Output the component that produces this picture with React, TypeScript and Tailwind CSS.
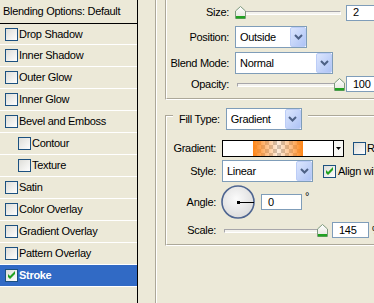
import React from "react";

function CheckBox({ checked = false }: { checked?: boolean }) {
  return (
    <svg width="13" height="13" viewBox="0 0 13 13" className="shrink-0">
      <defs>
        <linearGradient id="cbfill" x1="0" y1="0" x2="1" y2="1">
          <stop offset="0" stopColor="#DCDCD7" />
          <stop offset="1" stopColor="#FFFFFF" />
        </linearGradient>
      </defs>
      <rect x="0.5" y="0.5" width="12" height="12" fill="url(#cbfill)" stroke="#1C5180" />
      {checked && <path d="M3 5 L5 7 L10 2 L10 5 L5 10 L3 8 Z" fill="#21A121" />}
    </svg>
  );
}

function Combo({ text, className }: { text: string; className: string }) {
  return (
    <div className={`flex h-[22px] shrink-0 border border-[#7F9DB9] bg-white ${className}`}>
      <span className="flex flex-1 items-center pl-[4px]">{text}</span>
      <div className="flex w-[16px] items-center justify-center rounded-[2px] border border-[#BCCDF7] bg-gradient-to-br from-[#DCE6FD] to-[#AEC3F5]">
        <svg width="9" height="6" viewBox="0 0 9 6">
          <polyline points="1,1 4.5,4.5 8,1" fill="none" stroke="#4D6185" strokeWidth="2" />
        </svg>
      </div>
    </div>
  );
}

function Thumb() {
  return (
    <svg width="11" height="13" viewBox="0 0 11 13">
      <defs>
        <linearGradient id="thumbfill" x1="0" y1="0" x2="0" y2="1">
          <stop offset="0" stopColor="#FFFFFF" />
          <stop offset="1" stopColor="#E4E4DC" />
        </linearGradient>
      </defs>
      <path d="M0.5 12.5 V5 L5.5 0.5 L10.5 5 V12.5 Z" fill="url(#thumbfill)" stroke="#7E9A7E" />
      <rect x="1" y="10" width="9" height="2.5" fill="#21A121" />
    </svg>
  );
}

function Slider({ className, thumbClass }: { className: string; thumbClass: string }) {
  return (
    <div className={`relative h-[13px] shrink-0 ${className}`}>
      <div className="absolute left-[2px] right-[3px] top-[5px] h-[4px] border border-[#A7A6AA] border-b-white border-r-white bg-[#F4F3EE]" />
      <div className={`absolute top-0 h-[13px] ${thumbClass}`}>
        <Thumb />
      </div>
    </div>
  );
}

function TextBox({ value, className }: { value: string; className: string }) {
  return (
    <div className={`flex h-[16px] shrink-0 items-center border border-[#7F9DB9] bg-white pl-[6px] ${className}`}>
      {value}
    </div>
  );
}

const rows: { label: string; indent?: boolean; selected?: boolean }[] = [
  { label: "Drop Shadow" },
  { label: "Inner Shadow" },
  { label: "Outer Glow" },
  { label: "Inner Glow" },
  { label: "Bevel and Emboss" },
  { label: "Contour", indent: true },
  { label: "Texture", indent: true },
  { label: "Satin" },
  { label: "Color Overlay" },
  { label: "Gradient Overlay" },
  { label: "Pattern Overlay" },
  { label: "Stroke", selected: true },
];

export default function App() {
  return (
    <div className="flex h-[303px] w-[374px] overflow-hidden bg-[#ECE9D8] font-['Liberation_Sans',Arial,sans-serif] text-[11px] leading-none tracking-[-0.3px] text-black">
      {/* Left style list */}
      <div className="flex w-[138px] shrink-0 flex-col border-r border-black">
        <div className="flex h-[23px] items-center pl-[3px]">Blending Options: Default</div>
        <div className="h-px bg-black" />
        {rows.map((r, i) => (
          <div
            key={r.label}
            className={`flex shrink-0 items-center border-b border-white ${i === 0 ? "h-[21px]" : "h-[22px]"} ${
              r.selected ? "bg-[#316AC5] font-bold text-white" : ""
            } ${r.indent ? "pl-[18px]" : "pl-[5px]"}`}
          >
            <CheckBox checked={!!r.selected} />
            <span className="ml-[1px]">{r.label}</span>
          </div>
        ))}
      </div>

      {/* Right panel */}
      <div className="min-w-0 flex-1 overflow-hidden pl-[17px]">
        <div className="h-full border-l border-[#ACA899]">
          <div className="h-full border-l border-white pl-[8px]">
            {/* Structure group (top cut off) */}
            <div className="w-[240px] border-b border-l border-b-white border-l-[#ACA899]">
              <div className="flex flex-col border-b border-l border-b-[#ACA899] border-l-white pb-[6px] pt-[4px]">
                <div className="flex h-[17px] items-center">
                  <span className="w-[62px] shrink-0 text-right">Size:</span>
                  <Slider className="ml-[6px] w-[109px]" thumbClass="left-0" />
                  <TextBox value="2" className="ml-[2px] w-[36px]" />
                </div>
                <div className="mt-[5px] flex h-[22px] items-center">
                  <span className="w-[62px] shrink-0 text-right">Position:</span>
                  <Combo text="Outside" className="ml-[6px] w-[72px]" />
                </div>
                <div className="mt-[4px] flex h-[22px] items-center">
                  <span className="w-[62px] shrink-0 text-right">Blend Mode:</span>
                  <Combo text="Normal" className="ml-[6px] w-[98px]" />
                </div>
                <div className="mt-[2px] flex h-[16px] items-center">
                  <span className="w-[62px] shrink-0 text-right">Opacity:</span>
                  <Slider className="ml-[6px] w-[109px]" thumbClass="left-[99px]" />
                  <TextBox value="100" className="ml-[2px] w-[36px]" />
                </div>
              </div>
            </div>

            {/* Fill group */}
            <div className="relative mt-[15px] w-[240px] border-b border-l border-t border-[#ACA899] border-b-white">
              <div className="flex flex-col gap-[3px] border-b border-l border-t border-white border-b-[#ACA899] pb-[6px] pt-[23px]">
                <div className="flex h-[17px] items-center">
                  <span className="w-[49px] shrink-0 text-right">Gradient:</span>
                  <div className="ml-[6px] flex h-[17px] shrink-0 border border-black">
                    <div className="flex w-[110px] bg-white">
                      <div className="ml-[30px] h-full w-[50px] bg-[conic-gradient(#C8C8C8_25%,#FFFFFF_0_50%,#C8C8C8_0_75%,#FFFFFF_0)] bg-[length:8px_8px]">
                        <div className="h-full w-full bg-[linear-gradient(to_right,#FF8516_0%,rgba(255,133,22,0.55)_25%,rgba(255,133,22,0.15)_50%,rgba(255,133,22,0.5)_75%,#FF8516_100%)]" />
                      </div>
                    </div>
                    <div className="flex w-[10px] items-center justify-center border-l border-black bg-[#F7F7F4]">
                      <svg width="5" height="3" viewBox="0 0 5 3">
                        <path d="M0 0 H5 L2.5 3 Z" fill="#000" />
                      </svg>
                    </div>
                  </div>
                  <div className="ml-[9px] flex items-center">
                    <CheckBox />
                    <span className="ml-[1px]">Reverse</span>
                  </div>
                </div>
                <div className="flex h-[22px] items-center">
                  <span className="w-[49px] shrink-0 text-right">Style:</span>
                  <Combo text="Linear" className="ml-[6px] w-[91px]" />
                  <div className="ml-[10px] flex items-center">
                    <CheckBox checked />
                    <span className="ml-[2px] whitespace-nowrap">Align with Layer</span>
                  </div>
                </div>
                <div className="flex h-[34px] items-center">
                  <span className="w-[49px] shrink-0 text-right">Angle:</span>
                  <svg width="34" height="34" viewBox="0 0 34 34" className="ml-[5px] shrink-0">
                    <defs>
                      <radialGradient id="angfill" cx="0.45" cy="0.4" r="0.65">
                        <stop offset="0" stopColor="#FBFBFB" />
                        <stop offset="1" stopColor="#DADADA" />
                      </radialGradient>
                    </defs>
                    <circle cx="17" cy="17" r="16" fill="url(#angfill)" stroke="#4E6591" strokeWidth="1.6" />
                    <line x1="17" y1="17.5" x2="33" y2="17.5" stroke="#000" />
                    <rect x="16" y="16" width="3" height="3" fill="#000" />
                  </svg>
                  <TextBox value="0" className="ml-[6px] w-[41px]" />
                  <span className="ml-[3px] self-start pt-[6px]">°</span>
                </div>
                <div className="flex h-[16px] items-center">
                  <span className="w-[49px] shrink-0 text-right">Scale:</span>
                  <Slider className="ml-[6px] w-[104px]" thumbClass="left-[95px]" />
                  <TextBox value="145" className="ml-[6px] w-[37px]" />
                  <span className="ml-[3px]">%</span>
                </div>
              </div>
              <div className="absolute -top-[8px] left-[7px] flex items-center gap-[6px] bg-[#ECE9D8] px-[6px]">
                <span className="whitespace-nowrap">Fill Type:</span>
                <Combo text="Gradient" className="w-[76px]" />
              </div>
            </div>
          </div>
        </div>
      </div>
    </div>
  );
}
